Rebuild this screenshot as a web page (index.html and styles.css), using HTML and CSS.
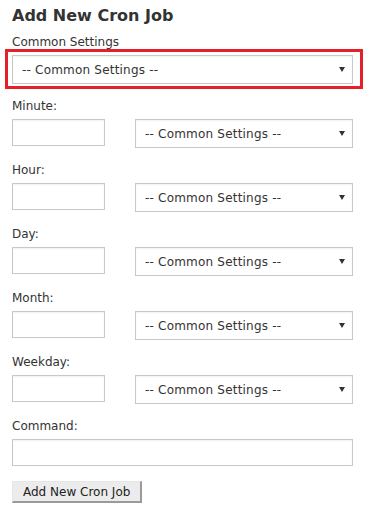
FILE: index.html
```html
<!DOCTYPE html>
<html lang="en">
<head>
    <meta charset="UTF-8">
    <meta name="viewport" content="width=device-width, initial-scale=1.0">
    <title>Add New Cron Job</title>
    <link rel="stylesheet" href="styles.css">
</head>
<body>
    <div class="container">
        <h2>Add New Cron Job</h2>

        <div class="field field-first">
            <label for="common">Common Settings</label>
            <div class="highlight">
                <span class="select-wrap select-wide">
                    <select id="common"><option>-- Common Settings --</option></select>
                </span>
            </div>
        </div>

        <div class="field">
            <label for="minute">Minute:</label>
            <div class="row">
                <input type="text" id="minute">
                <span class="select-wrap"><select><option>-- Common Settings --</option></select></span>
            </div>
        </div>

        <div class="field">
            <label for="hour">Hour:</label>
            <div class="row">
                <input type="text" id="hour">
                <span class="select-wrap"><select><option>-- Common Settings --</option></select></span>
            </div>
        </div>

        <div class="field">
            <label for="day">Day:</label>
            <div class="row">
                <input type="text" id="day">
                <span class="select-wrap"><select><option>-- Common Settings --</option></select></span>
            </div>
        </div>

        <div class="field">
            <label for="month">Month:</label>
            <div class="row">
                <input type="text" id="month">
                <span class="select-wrap"><select><option>-- Common Settings --</option></select></span>
            </div>
        </div>

        <div class="field">
            <label for="weekday">Weekday:</label>
            <div class="row">
                <input type="text" id="weekday">
                <span class="select-wrap"><select><option>-- Common Settings --</option></select></span>
            </div>
        </div>

        <div class="field">
            <label for="command">Command:</label>
            <input type="text" id="command" class="input-wide">
        </div>

        <button type="button">Add New Cron Job</button>
    </div>
</body>
</html>
```

FILE: styles.css
```css
body {
    margin: 0;
    font-family: "DejaVu Sans", Verdana, sans-serif;
    font-size: 12px;
    color: #333;
    background: #fff;
}
.container {
    padding: 6px 12px;
    width: 341px;
}
h2 {
    margin: 0 0 9px;
    font-size: 16px;
    line-height: 20px;
    font-weight: bold;
    color: #333;
}
.field {
    margin-top: 15px;
}
.field-first {
    margin-top: 0;
}
label {
    display: block;
    line-height: 15px;
    margin-bottom: 5px;
    color: #333;
}
.row {
    display: flex;
    gap: 30px;
    align-items: flex-start;
}
input[type="text"] {
    box-sizing: border-box;
    width: 93px;
    height: 27px;
    margin: 0;
    padding: 0 6px;
    border: 1px solid #c8c8c8;
    box-shadow: inset 0 1px 2px rgba(0, 0, 0, 0.06);
    font: inherit;
}
input.input-wide {
    display: block;
    width: 341px;
}
.highlight {
    position: relative;
}
.highlight::before {
    content: "";
    position: absolute;
    top: -6px;
    left: -7px;
    right: -10px;
    bottom: -5px;
    border: 3px solid #e5202b;
    pointer-events: none;
}
.select-wrap {
    position: relative;
    display: block;
    width: 218px;
}
.select-wide {
    width: 341px;
}
.select-wrap::after {
    content: "";
    position: absolute;
    right: 8px;
    top: 12px;
    border-left: 3px solid transparent;
    border-right: 3px solid transparent;
    border-top: 5px solid #333;
}
select {
    -webkit-appearance: none;
    appearance: none;
    box-sizing: border-box;
    display: block;
    width: 100%;
    height: 29px;
    margin: 0;
    padding: 0 20px 0 9px;
    border: 1px solid #c8c8c8;
    border-radius: 0;
    background: #fff;
    box-shadow: inset 0 1px 2px rgba(0, 0, 0, 0.05);
    font: inherit;
    letter-spacing: 0.2px;
    color: #333;
}
button {
    box-sizing: border-box;
    margin-top: 15px;
    height: 22px;
    padding: 0 10px;
    border-style: solid;
    border-width: 1px 2px 2px 1px;
    border-color: #e6e6e6 #9a9a9a #9a9a9a #e6e6e6;
    background: #ececec;
    font: inherit;
    color: #222;
    line-height: 18px;
    cursor: pointer;
}
```
